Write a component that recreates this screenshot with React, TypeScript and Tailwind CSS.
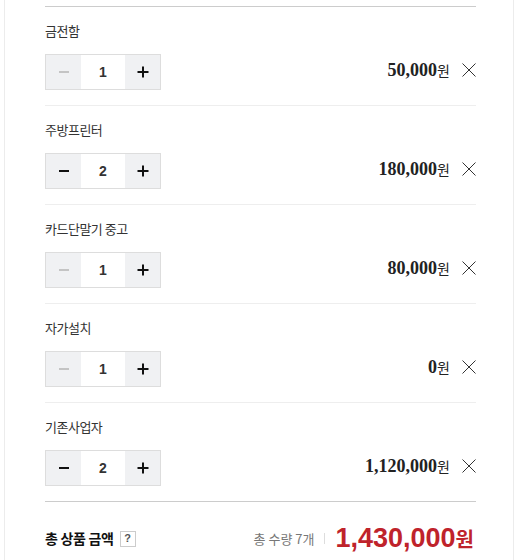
import { useState } from "react";

type Item = { name: string; qty: number; price: string };

const initialItems: Item[] = [
  { name: "금전함", qty: 1, price: "50,000" },
  { name: "주방프린터", qty: 2, price: "180,000" },
  { name: "카드단말기 중고", qty: 1, price: "80,000" },
  { name: "자가설치", qty: 1, price: "0" },
  { name: "기존사업자", qty: 2, price: "1,120,000" },
];

const kr = { fontFamily: "'Noto Sans CJK KR', 'Liberation Sans', sans-serif" };

function MinusIcon({ disabled }: { disabled: boolean }) {
  return (
    <svg width="12" height="12" viewBox="0 0 12 12">
      <line x1="1" y1="6" x2="11" y2="6" stroke={disabled ? "#c4c4c4" : "#111"} strokeWidth="2" />
    </svg>
  );
}

function PlusIcon() {
  return (
    <svg width="12" height="12" viewBox="0 0 12 12">
      <line x1="0.5" y1="6" x2="11.5" y2="6" stroke="#111" strokeWidth="2" />
      <line x1="6" y1="0.5" x2="6" y2="11.5" stroke="#111" strokeWidth="2" />
    </svg>
  );
}

function CloseIcon() {
  return (
    <svg width="14" height="14" viewBox="0 0 14 14">
      <line x1="0.5" y1="0.5" x2="13.5" y2="13.5" stroke="#333" strokeWidth="1" />
      <line x1="13.5" y1="0.5" x2="0.5" y2="13.5" stroke="#333" strokeWidth="1" />
    </svg>
  );
}

export default function App() {
  const [items] = useState(initialItems);

  return (
    <div className="min-h-[560px] bg-white">
      <div className="ml-[4px] min-h-[560px] w-[510px] border-x border-[#ececec] pl-[40px] pr-[37px] pt-[6px]">
        <div className="border-t border-[#cccccc]">
          {items.map((item, i) => (
            <div
              key={item.name}
              className={`pt-[14px] pb-[15px] ${i < items.length - 1 ? "border-b border-[#eeeeee]" : ""}`}
            >
              <p className="mb-[13px] text-[13px] leading-[20px] tracking-[-0.5px] text-[#333]" style={kr}>
                {item.name}
              </p>
              <div className="flex items-center justify-between">
                {/* quantity stepper */}
                <div className="flex h-[36px] w-[116px] border border-[#dddddd]">
                  <button className="flex w-[35px] items-center justify-center bg-[#f0f1f3]">
                    <MinusIcon disabled={item.qty <= 1} />
                  </button>
                  <span className="flex flex-1 items-center justify-center bg-white font-['Liberation_Sans',sans-serif] text-[14px] font-bold text-[#333]">
                    {item.qty}
                  </span>
                  <button className="flex w-[35px] items-center justify-center bg-[#f0f1f3]">
                    <PlusIcon />
                  </button>
                </div>

                <div className="mb-[5px] flex items-center gap-[12px]">
                  <p className="flex items-baseline text-[#222]">
                    <span className="font-['Liberation_Serif',serif] text-[18px] font-bold leading-[20px]">
                      {item.price}
                    </span>
                    <span className="text-[14px] leading-[20px]" style={kr}>
                      원
                    </span>
                  </p>
                  <CloseIcon />
                </div>
              </div>
            </div>
          ))}
        </div>

        {/* totals */}
        <div className="flex h-[74px] items-center justify-between border-t border-[#cccccc]">
          <div className="flex items-center gap-[6px]">
            <span className="text-[14px] font-bold tracking-[-0.3px] text-[#111]" style={kr}>
              총 상품 금액
            </span>
            <span className="flex h-[16px] w-[16px] items-center justify-center border border-[#cccccc] font-['Liberation_Sans',sans-serif] text-[11px] font-bold text-[#555]">
              ?
            </span>
          </div>
          <div className="flex items-center pr-[2px]">
            <span className="text-[13px] text-[#777]" style={kr}>
              총 수량 7개
            </span>
            <span className="mx-[10px] h-[11px] w-px bg-[#dddddd]" />
            <span className="flex items-baseline text-[#bf232b]">
              <span className="font-['Liberation_Sans',sans-serif] text-[27px] font-bold leading-[30px]">
                1,430,000
              </span>
              <span className="text-[20px] font-bold" style={kr}>
                원
              </span>
            </span>
          </div>
        </div>
      </div>
    </div>
  );
}
